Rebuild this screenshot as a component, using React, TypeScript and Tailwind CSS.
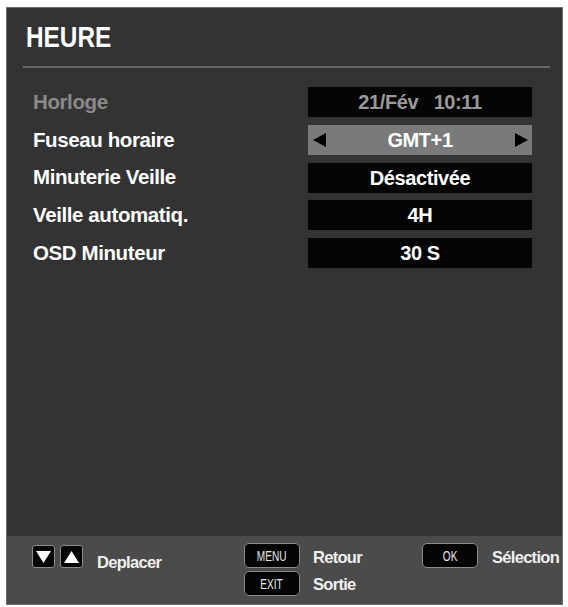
import React from "react";

const F = { fontFamily: '"Liberation Sans", Arial, sans-serif' };

function Row({ label, value, dim, selected }: { label: string; value: React.ReactNode; dim?: boolean; selected?: boolean }) {
  return (
    <div className="flex items-center h-[30px]">
      <div className={`w-[301px] pl-[26px] text-[20.5px] font-bold leading-none tracking-[-0.4px] ${dim ? "text-[#8a8a8a]" : "text-white"}`}>
        {label}
      </div>
      <div
        className={`relative w-[224px] h-[30px] flex items-center justify-center text-[20px] font-bold leading-none tracking-[-0.4px] ${
          selected ? "bg-[#7a7a7a] text-white" : "bg-[#050505]"
        } ${dim ? "text-[#9a9a9a]" : "text-white"}`}
      >
        {selected && (
          <svg className="absolute left-[5px] top-[8px]" width="13" height="14" viewBox="0 0 13 14">
            <polygon points="13,0 13,14 0,7" fill="#000" />
          </svg>
        )}
        <span className="whitespace-pre">{value}</span>
        {selected && (
          <svg className="absolute right-[4px] top-[8px]" width="13" height="14" viewBox="0 0 13 14">
            <polygon points="0,0 0,14 13,7" fill="#000" />
          </svg>
        )}
      </div>
    </div>
  );
}

function KeyBtn({ label }: { label: string }) {
  return (
    <div className="w-[56px] h-[25px] rounded-[5px] bg-[#050505] border-[1.5px] border-[#8c8c8c] flex items-center justify-center">
      <span className="inline-block scale-x-[0.72] text-[14px] leading-none text-[#e8e8e8]">{label}</span>
    </div>
  );
}

function Arrow({ up }: { up?: boolean }) {
  return (
    <div className="w-[23px] h-[23px] rounded-[3px] bg-[#050505] border-[1.5px] border-[#8c8c8c] flex items-center justify-center">
      <svg width="15" height="14" viewBox="0 0 15 14">
        {up ? <polygon points="0,13 15,13 7.5,1" fill="#fff" /> : <polygon points="0,1 15,1 7.5,13" fill="#fff" />}
      </svg>
    </div>
  );
}

const footText = "text-[16.5px] font-bold leading-none tracking-[-0.7px] text-[#f0f0f0]";

export default function App() {
  return (
    <div className="w-[568px] h-[607px] bg-white pt-[7px] pl-[6px]" style={F}>
      <div className="w-[557px] h-[598px] bg-[#333333] border border-[#6e6e6e] flex flex-col overflow-hidden">
        <div className="pt-[15px] pl-[19px] h-[58px]">
          <span className="inline-block origin-left scale-x-[0.84] text-[29px] font-bold leading-none text-white">HEURE</span>
        </div>
        <div className="ml-[16px] w-[527px] h-[2px] bg-[#676767]" />
        <div className="flex flex-col gap-[7.75px] pt-[19px]">
          <Row label="Horloge" value={"21/Fév   10:11"} dim />
          <Row label="Fuseau horaire" value="GMT+1" selected />
          <Row label="Minuterie Veille" value="Désactivée" />
          <Row label="Veille automatiq." value="4H" />
          <Row label="OSD Minuteur" value="30 S" />
        </div>
        <div className="flex-1" />
        <div className="h-[68px] bg-[#4b4b4b] flex pt-[7px]">
          <div className="w-[237px] pl-[25px] pt-[2px] flex items-start">
            <div className="flex gap-[5px]">
              <Arrow />
              <Arrow up />
            </div>
            <span className={`ml-[14px] mt-[9px] ${footText}`}>Deplacer</span>
          </div>
          <div className="w-[178px] flex flex-col gap-[3px]">
            <div className="flex items-center">
              <KeyBtn label="MENU" />
              <span className={`ml-[13px] mt-[3px] ${footText}`}>Retour</span>
            </div>
            <div className="flex items-center">
              <KeyBtn label="EXIT" />
              <span className={`ml-[13px] mt-[1px] ${footText}`}>Sortie</span>
            </div>
          </div>
          <div className="flex items-start">
            <div className="flex items-center">
              <KeyBtn label="OK" />
              <span className={`ml-[14px] mt-[3px] ${footText}`}>Sélection</span>
            </div>
          </div>
        </div>
      </div>
    </div>
  );
}
